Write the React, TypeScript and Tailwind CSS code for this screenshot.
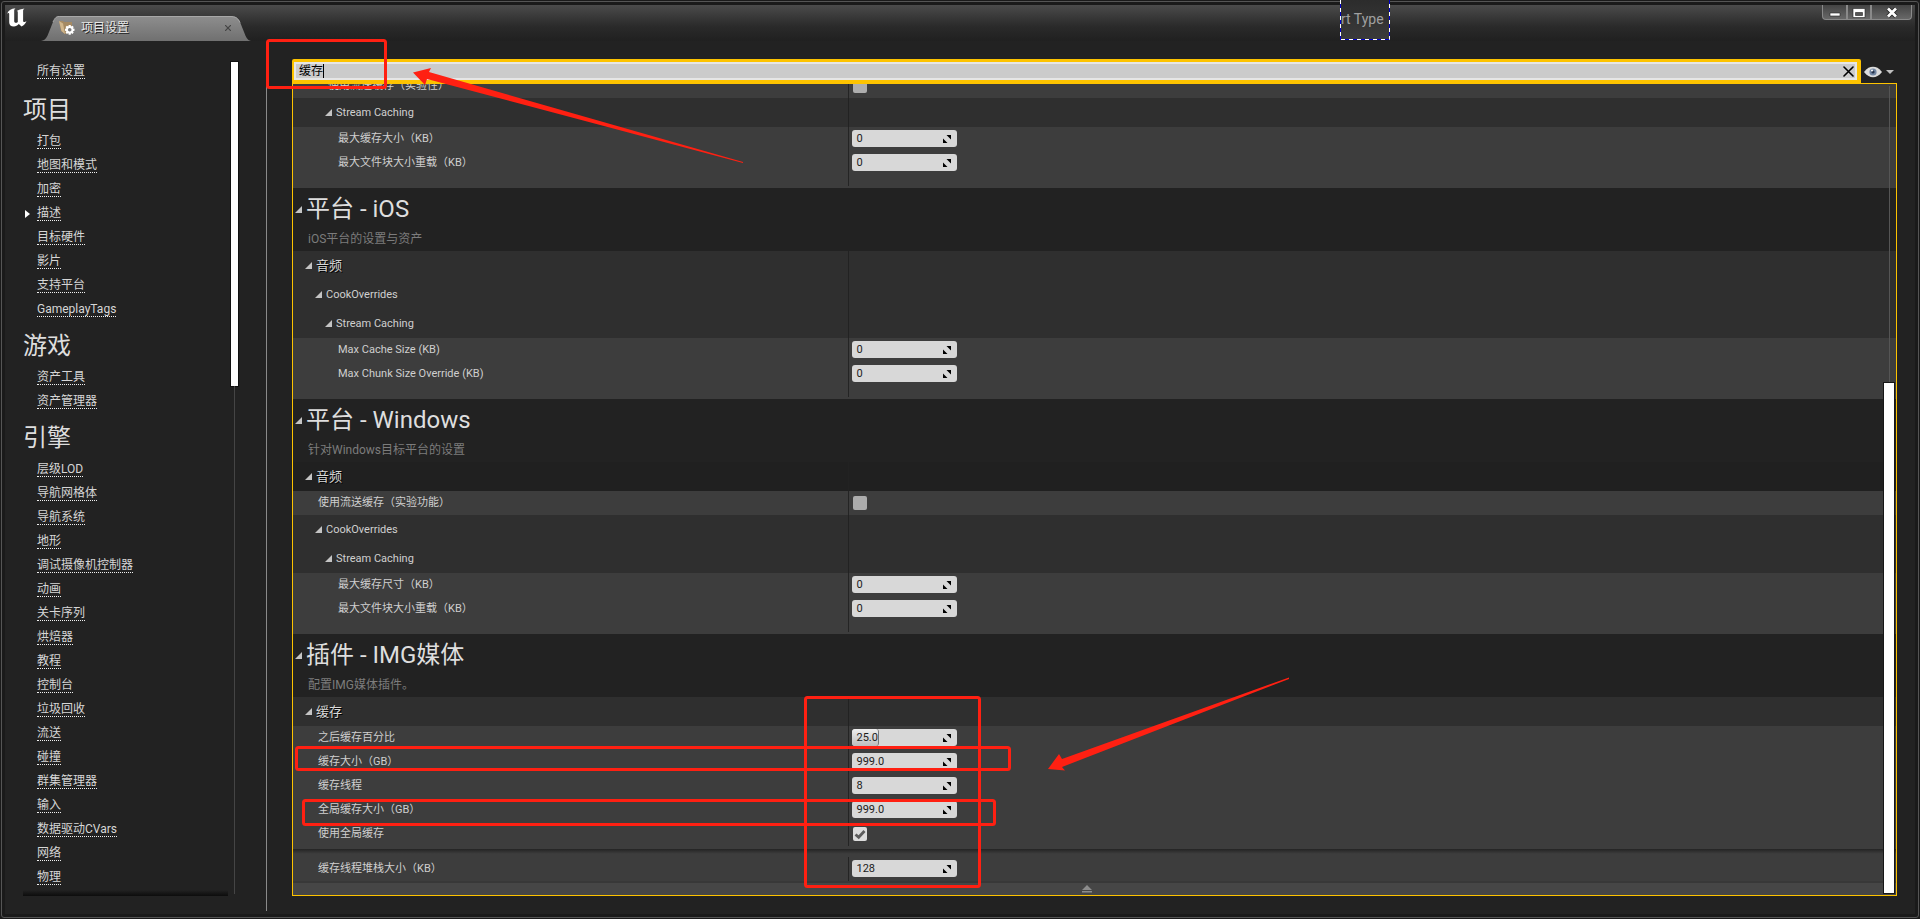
import { useState, type ReactNode } from "react";

type Group = { title: string; links: string[] };

// Left navigation, grouped the way the editor groups its setting pages
const NAV: Group[] = [
  {
    title: "项目",
    links: ["打包", "地图和模式", "加密", "描述", "目标硬件", "影片", "支持平台", "GameplayTags"],
  },
  { title: "游戏", links: ["资产工具", "资产管理器"] },
  {
    title: "引擎",
    links: [
      "层级LOD",
      "导航网格体",
      "导航系统",
      "地形",
      "调试摄像机控制器",
      "动画",
      "关卡序列",
      "烘焙器",
      "教程",
      "控制台",
      "垃圾回收",
      "流送",
      "碰撞",
      "群集管理器",
      "输入",
      "数据驱动CVars",
      "网络",
      "物理",
    ],
  },
];

const EXPANDED_LINK = "描述";

const COLUMNS = "grid grid-cols-[35fr_66fr]";

function Logo() {
  return (
    <svg className="ml-0.5 mt-[3px] h-[19px] w-5 shrink-0" viewBox="0 0 20 19" fill="#fff">
      <path d="M0 6.2C1 2.600 4 .6 8.600.2 7.500 1 7.200 1.700 7.200 2.800v10.200c0 1.200.6 1.800 1.500 1.800.9 0 1.500-.3 2.100-.9V4.200c0-.9-.4-1.300-1.200-1.300C11.500 1.800 14 .8 17.600.4c-1.200.8-1.500 1.500-1.500 2.500v9.900c0 .9.5 1.300 1.200 1.300.7 0 1.300-.3 2.200-1.100-.9 2.500-2.500 4.200-5 5.500l-2.700-2.400c-1.300 1.500-3 2.500-4.900 2.500-3 0-4.700-1.500-4.700-4.300V6.200c0-.9-.3-1.300-.8-1.300-.5 0-.9.4-1.400 1.300z" />
    </svg>
  );
}

function FolderIcon() {
  return (
    <svg className="h-4 w-4" viewBox="0 0 16 16">
      <path d="M0 1h4l1 1h8v10l-7 2-4-3z" fill="#a58a63" />
      <path d="M0 1l4 2.500L6 14l-3.500-3z" fill="#d0b68c" />
      <path
        d="M9.700 5h2l.3 1.500 1.400-.8 1.300 1.300-.8 1.400 1.600.4v2l-1.600.4.8 1.400-1.300 1.300-1.400-.8-.3 1.600h-2l-.4-1.600-1.400.8-1.300-1.300.8-1.400L6 10.800v-2l1.400-.4L6.600 7l1.300-1.300 1.400.8z"
        fill="#fff"
      />
      <circle cx="10.700" cy="9.800" r="1.800" fill="#777" />
    </svg>
  );
}

function Arrow() {
  return (
    <svg className="h-[7px] w-[7px] shrink-0" viewBox="0 0 7 7">
      <path d="M7 0v7H0z" fill="#c4c4c4" />
    </svg>
  );
}

function TitleBar() {
  return (
    <header className="flex h-9 shrink-0 bg-linear-to-b from-[#4b4b4b] via-[#2a2a2a] via-60% to-[#202020]">
      <Logo />
      <div className="relative ml-3.5 mt-[11px] flex h-[25px] w-[210px] items-center pb-0.5 pl-[18px] pr-5">
        <svg className="absolute inset-0 h-full w-full" viewBox="0 0 210 25" preserveAspectRatio="none">
          <defs>
            <linearGradient id="tab" x1="0" y1="0" x2="0" y2="1">
              <stop offset="0" stopColor="#8e8e8e" />
              <stop offset="1" stopColor="#707070" />
            </linearGradient>
          </defs>
          <path d="M0 25C5 24 6 21 8 16L12 6C14 2 15 0 20 0h169c6 0 8 2 10 6l4 10c2 5 3 8 7 9z" fill="url(#tab)" />
          <path d="M12 6C14 2 15 0 20 .5h169c6 0 8 2 10 6" fill="none" stroke="#a8a8a8" />
        </svg>
        <span className="relative flex items-center gap-1.5">
          <FolderIcon />
          <span className="text-[12px] leading-4 text-[#e6e6e6] [text-shadow:1px_1px_0_#222]">项目设置</span>
        </span>
        <button type="button" aria-label="关闭标签" className="relative ml-auto">
          <svg className="h-1.5 w-1.5" viewBox="0 0 6 6" stroke="#444" strokeWidth="1.200">
            <path d="M0 0l6 6M6 0L0 6" />
          </svg>
        </button>
      </div>
      <WindowButtons />
    </header>
  );
}

function WindowButtons() {
  const style =
    "flex items-center justify-center border border-t-0 border-[#8a8a8a] bg-linear-to-b from-[#444] to-[#686868]";
  return (
    <div className="ml-auto mr-[3px] flex h-[15px]">
      <button type="button" aria-label="最小化" className={`w-[25px] rounded-bl-sm ${style}`}>
        <svg className="h-[15px] w-3" viewBox="0 0 12 15">
          <path d="M1 8h10v3H1z" fill="#fff" stroke="#222" strokeWidth="0.600" />
        </svg>
      </button>
      <button type="button" aria-label="最大化" className={`w-6 ${style}`}>
        <svg className="h-[15px] w-3.5" viewBox="0 0 14 15">
          <path d="M1 3.500h12v9H1z" fill="#fff" stroke="#222" strokeWidth="0.600" />
          <path d="M3.500 7.500h7v3h-7z" fill="#555" stroke="#222" strokeWidth="0.600" />
        </svg>
      </button>
      <button type="button" aria-label="关闭" className={`w-[41px] rounded-br-sm ${style}`}>
        <svg className="h-[15px] w-3.5" viewBox="0 0 14 15" fill="none">
          <path d="M3 3.500l8 8M11 3.500l-8 8" stroke="#222" strokeWidth="4.500" />
          <path d="M3 3.500l8 8M11 3.500l-8 8" stroke="#fff" strokeWidth="2.800" />
        </svg>
      </button>
    </div>
  );
}

function NavLink({ children }: { children: string }) {
  return (
    <li className="flex h-6 items-center">
      <span className="w-8 pl-5">
        {children === EXPANDED_LINK && (
          <svg className="h-2 w-[5px]" viewBox="0 0 5 8">
            <path d="M0 0l5 4-5 4z" fill="#fff" />
          </svg>
        )}
      </span>
      <a href="#" className="border-b border-dotted border-[#f0f0f0] text-[12px] leading-[13px] text-[#d6d6d6]">
        {children}
      </a>
    </li>
  );
}

function Sidebar() {
  return (
    <aside className="flex w-[261px] shrink-0 pb-[18px] pt-[18px]">
      <nav className="relative w-[223px] overflow-hidden pt-px">
        <ul className="mb-0.5">
          <NavLink>所有设置</NavLink>
        </ul>
        {NAV.map((group) => (
          <section key={group.title}>
            <h2 className="flex h-11 items-center pl-[18px] pt-1 text-[24px] leading-8 text-[#dedede]">{group.title}</h2>
            <ul>
              {group.links.map((link) => (
                <NavLink key={link}>{link}</NavLink>
              ))}
            </ul>
          </section>
        ))}
        {/* fade that says the list goes on */}
        <div className="absolute bottom-0 left-[18px] right-0 h-1.5 bg-linear-to-b from-transparent to-[#0c0c0c]" />
      </nav>
      <div className="ml-[3px] flex w-[7px] flex-col items-center pb-0.5 pt-[3px]">
        <div className="h-[39%] w-full bg-white shadow-[0_0_0_1px_#111]" />
        <div className="w-px flex-1 bg-[#454545]" />
      </div>
    </aside>
  );
}

function SearchRow() {
  const [query, setQuery] = useState("缓存");
  return (
    <div className="flex h-[25px] shrink-0">
      <label className="flex flex-1 items-center rounded-t-xs border-b-4 border-l-2 border-r-4 border-t-3 border-[#fdc300] bg-[#e6e6e6] p-0.5">
        <span className="flex h-3.5 flex-1 items-center bg-[#cbcbcb] pl-[3px]">
          <span className="sr-only">搜索</span>
          <input
            value={query}
            onChange={(e) => setQuery(e.target.value)}
            className="h-3.5 w-6 bg-transparent text-[12px] leading-3.5 text-black outline-none"
          />
          <span className="h-3.5 w-px bg-black" />
          <button type="button" aria-label="清除" className="ml-auto mr-px">
            <svg className="h-[11px] w-[11px]" viewBox="0 0 11 11" stroke="#000" strokeWidth="1.600" strokeLinecap="round">
              <path d="M1 1l9 9M10 1l-9 9" />
            </svg>
          </button>
        </span>
      </label>
      <button type="button" aria-label="视图选项" className="flex w-9 items-center gap-1 pl-[3px]">
        <svg className="h-3 w-[18px]" viewBox="0 0 18 12">
          <path d="M0 6C3 2 6 .8 9 .8S15 2 18 6c-3 4-6 5.200-9 5.200S3 10 0 6z" fill="#dcdcdc" />
          <circle cx="9" cy="6" r="3.600" fill="#7387a3" />
          <circle cx="9" cy="6" r="1.600" fill="#26344d" />
          <circle cx="8" cy="4.500" r="1" fill="#fff" />
        </svg>
        <svg className="h-1 w-2" viewBox="0 0 8 4">
          <path d="M0 0h8L4 4z" fill="#c0c0c0" />
        </svg>
      </button>
    </div>
  );
}

function SectionHeader({ title, note }: { title: string; note: string }) {
  return (
    <div className="h-[63px] bg-[#222] pl-0.5">
      <h2 className="flex h-[42px] items-center gap-1 text-[24px] leading-8 text-[#dedede]">
        <Arrow />
        {title}
      </h2>
      <p className="pl-[13px] text-[12px] leading-[18px] text-[#7c7c7c]">{note}</p>
    </div>
  );
}

// depth 0 is a category, 1 and 2 are structs nested in it
function GroupRow({ title, depth = 0, dark = false }: { title: string; depth?: 0 | 1 | 2; dark?: boolean }) {
  const indent = ["pl-3", "pl-[22px]", "pl-8"][depth];
  const text = depth === 0 ? "text-[13px] text-[#d8d8d8] [text-shadow:1px_1px_0_#000]" : "text-[11px] text-[#cfcfcf]";
  return (
    <div className={`${COLUMNS} h-[29px] ${dark ? "bg-[#202020]" : "bg-[#2f2f2f]"}`}>
      <div className={`flex items-center gap-1 ${indent}`}>
        <Arrow />
        <span className={`leading-4 ${text}`}>{title}</span>
      </div>
      <div className="border-l border-[#222]" />
    </div>
  );
}

type RowProps = { id: string; label: string; depth?: 0 | 1 | 2 };

function Row({ id, label, depth = 0, children }: RowProps & { children: ReactNode }) {
  const indent = ["pl-[25px]", "pl-[35px]", "pl-[45px]"][depth];
  return (
    <div className={`${COLUMNS} h-6 bg-[#3d3d3d]`}>
      <label htmlFor={id} className={`pt-[3px] text-[11px] leading-[18px] text-[#cfcfcf] ${indent}`}>
        {label}
      </label>
      <div className="border-l border-[#242424] pl-[3px] pt-[3px]">{children}</div>
    </div>
  );
}

function NumberRow({ id, label, value, depth, fill }: RowProps & { value: string; fill?: number }) {
  return (
    <Row id={id} label={label} depth={depth}>
      <div className="relative flex h-[17px] w-[105px] items-center overflow-hidden rounded-[3px] bg-[#d8d8d8] pl-1 pr-1.5">
        {fill !== undefined && (
          <div
            className="absolute inset-y-0 left-0 rounded-[3px] border-r border-[#777] bg-linear-to-b from-[#efefef] to-[#bdbdbd]"
            style={{ width: `${fill}%` }}
          />
        )}
        <input
          id={id}
          defaultValue={value}
          className="relative h-[17px] w-full min-w-0 bg-transparent pb-px text-[11px] leading-4 text-[#1c1c1c] outline-none"
        />
        <svg className="mt-px h-2 w-2 shrink-0" viewBox="0 0 8 8">
          <path d="M3.500 0H8v4.500zM0 3.500V8h4.500z" fill="#000" />
        </svg>
      </div>
    </Row>
  );
}

function CheckRow({ id, label, depth, checked = false }: RowProps & { checked?: boolean }) {
  return (
    <Row id={id} label={label} depth={depth}>
      <span className="relative ml-px mt-[2px] block h-3.5 w-3.5">
        <input
          id={id}
          type="checkbox"
          defaultChecked={checked}
          className="peer block h-3.5 w-3.5 appearance-none rounded-xs bg-[#adadad] checked:bg-[#dcdcdc]"
        />
        <svg
          className="pointer-events-none absolute inset-0 hidden h-3.5 w-3.5 peer-checked:block"
          viewBox="0 0 14 14"
          fill="none"
          stroke="#5c5c5c"
          strokeWidth="2.800"
        >
          <path d="M2.500 7.500l3.200 2.800L11.500 4" />
        </svg>
      </span>
    </Row>
  );
}

function BlockEnd() {
  return (
    <div className={`${COLUMNS} h-[13px] bg-[#3d3d3d] pb-0.5`}>
      <div />
      <div className="border-l border-[#242424]" />
    </div>
  );
}

function Details() {
  return (
    <div className="relative -mt-px flex min-h-0 flex-1 flex-col justify-end overflow-hidden border border-[#fdc300]">
      <div className="shrink-0">
        <CheckRow id="android-stream" label="使用流送缓存（实验性）" depth={1} />
        <GroupRow title="Stream Caching" depth={2} />
        <NumberRow id="android-cache" label="最大缓存大小（KB）" value="0" depth={2} />
        <NumberRow id="android-chunk" label="最大文件块大小重载（KB）" value="0" depth={2} />
        <BlockEnd />

        <SectionHeader title="平台 - iOS" note="iOS平台的设置与资产" />
        <GroupRow title="音频" />
        <GroupRow title="CookOverrides" depth={1} />
        <GroupRow title="Stream Caching" depth={2} />
        <NumberRow id="ios-cache" label="Max Cache Size (KB)" value="0" depth={2} />
        <NumberRow id="ios-chunk" label="Max Chunk Size Override (KB)" value="0" depth={2} />
        <BlockEnd />

        <SectionHeader title="平台 - Windows" note="针对Windows目标平台的设置" />
        <GroupRow title="音频" dark />
        <CheckRow id="win-stream" label="使用流送缓存（实验功能）" />
        <GroupRow title="CookOverrides" depth={1} />
        <GroupRow title="Stream Caching" depth={2} />
        <NumberRow id="win-cache" label="最大缓存尺寸（KB）" value="0" depth={2} />
        <NumberRow id="win-chunk" label="最大文件块大小重载（KB）" value="0" depth={2} />
        <BlockEnd />

        <SectionHeader title="插件 - IMG媒体" note="配置IMG媒体插件。" />
        <GroupRow title="缓存" />
        <NumberRow id="img-behind" label="之后缓存百分比" value="25.0" fill={25} />
        <NumberRow id="img-size" label="缓存大小（GB）" value="999.0" />
        <NumberRow id="img-threads" label="缓存线程" value="8" />
        <NumberRow id="img-global" label="全局缓存大小（GB）" value="999.0" />
        <CheckRow id="img-use-global" label="使用全局缓存" checked />
        <div className="h-[3px] bg-[#3d3d3d]" />
        <div className="h-2 bg-linear-to-b from-[#242424] to-[#3d3d3d] to-60%" />
        <NumberRow id="img-stack" label="缓存线程堆栈大小（KB）" value="128" />
        <button
          type="button"
          aria-label="收起高级选项"
          className="flex h-3.5 w-full items-center justify-center border-t-2 border-[#383838] bg-[#464646] pr-4"
        >
          <svg className="h-2 w-2.5" viewBox="0 0 10 8">
            <path d="M5 0l5 5H0zM0 6h10v1.500H0z" fill="#8d8d8d" />
          </svg>
        </button>
      </div>

      {/* scroll bar, floats over the rows */}
      <div className="absolute bottom-0.5 right-0.5 top-0.5 flex w-2.5 flex-col items-center">
        <div className="w-px flex-7 bg-[#555]" />
        <div className="w-full flex-12 bg-white shadow-[0_0_0_1px_#161616]" />
      </div>
    </div>
  );
}

// Red boxes and arrows marked over the window
function Marks() {
  return (
    <svg className="pointer-events-none absolute left-0 top-0 h-[919px] w-[1920px]" viewBox="0 0 1920 919">
      <g fill="none" stroke="#ff2012" strokeWidth="3">
        <rect x="267.500" y="40.500" width="118" height="47" rx="2" />
        <rect x="805.500" y="697.500" width="174" height="189" rx="2" />
        <rect x="296.500" y="747.500" width="713" height="22" rx="2" />
        <rect x="303.500" y="800.500" width="691" height="24" rx="2" />
      </g>
      <g fill="#ff2012">
        <path d="M413 72.500L431 68l-2 4 314 90v1L427 79l-2 6z" />
        <path d="M1048 769l11-15 3 5 227-81.500v1.500L1062 767l3 3.500z" />
      </g>
    </svg>
  );
}

function DragGhost() {
  return (
    <div className="absolute left-[1340px] top-0 flex h-10 w-[50px] items-center overflow-hidden bg-linear-to-b from-[#2c2c2c] to-[#3b3b3b] pb-0.5 pl-px text-[14px] leading-5 text-[#a0a0a0]">
      <span className="whitespace-nowrap">rt Type</span>
      <svg className="absolute inset-0 h-10 w-[50px]" viewBox="0 0 50 40" fill="none">
        <path d="M.5 0v39.500h49V0" stroke="#0000c8" />
        <path d="M.5 0v39.500h49V0" stroke="#fff" strokeDasharray="4 4" />
      </svg>
    </div>
  );
}

export default function App() {
  return (
    <div className="relative h-screen overflow-hidden bg-[#1a1a1a] p-px font-[Roboto,'Noto_Sans_CJK_SC',sans-serif]">
      <div className="flex h-full flex-col rounded-[3px] border border-[#555] p-[3px]">
        <TitleBar />
        <div className="flex min-h-0 flex-1 bg-[#222]">
          <Sidebar />
          <div className="mb-[3px] mt-[18px] w-px bg-[#8a8a8a]" />
          <main className="ml-[25px] mr-[18px] flex min-w-0 flex-1 flex-col pb-[18px] pt-[18px]">
            <SearchRow />
            <Details />
          </main>
        </div>
      </div>
      <DragGhost />
      <Marks />
    </div>
  );
}
